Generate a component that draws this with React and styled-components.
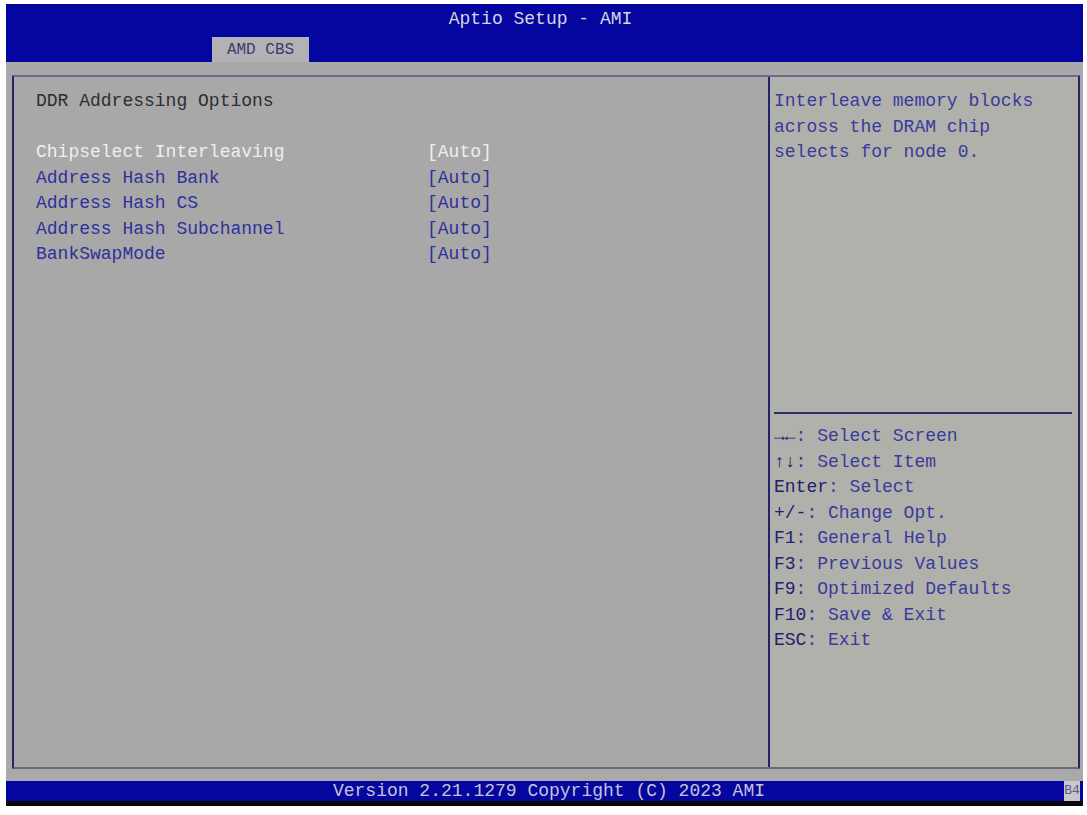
import styled, { createGlobalStyle } from 'styled-components';

const GlobalStyle = createGlobalStyle`
    body {
        margin: 0;
        background: #ffffff;
        font-family: "Liberation Mono", "DejaVu Sans Mono", monospace;
        font-size: 18px;
    }
`

const Screen = styled.div`
    width: 1077px;
    height: 802px;
    margin: 4px 0 0 6px;
    display: flex;
    flex-direction: column;
    background: #a9a9a9;
`

const TopBar = styled.div`
    height: 58px;
    background: #0505a0;
    display: flex;
    flex-direction: column;
    justify-content: space-between;
`

const Title = styled.div`
    color: #d6d6e0;
    text-align: center;
    line-height: 20px;
    padding-top: 5px;
    padding-right: 8px;
`

const TabRow = styled.div`
    display: flex;
    padding-left: 206px;
`

const Tab = styled.div`
    width: 97px;
    height: 25px;
    background: #b2b2b4;
    color: #3c3c6c;
    font-size: 16px;
    line-height: 27px;
    text-align: center;
`

const Body = styled.div`
    flex: 1;
    padding: 13px 3px 12px 6px;
    display: flex;
`

const Frame = styled.div`
    flex: 1;
    display: grid;
    grid-template-columns: 756px 1fr;
    border: 2px solid #24246c;
    border-top-color: #6a6a8a;
    border-bottom-color: #6a6a7a;
`

const LeftPanel = styled.div`
    background: #a8a8a8;
    padding: 12px 0 0 22px;
    border-right: 2px solid #22226a;
`

const Row = styled.div`
    display: flex;
    height: 25.5px;
    line-height: 25.5px;
    color: ${p => p.$color};
`

const Label = styled.span`
    width: 391px;
    white-space: pre;
`

const Value = styled.span`
    white-space: pre;
`

const RightPanel = styled.div`
    background: #b1b1ac;
    display: flex;
    flex-direction: column;
    padding: 0 6px 0 4px;
`

const HelpBlock = styled.div`
    height: 323px;
    padding-top: 12px;
    border-bottom: 2px solid #2c2c6e;
`

const KeyBlock = styled.div`
    padding-top: 10px;
`

const HelpLine = styled.div`
    height: 25.5px;
    line-height: 25.5px;
    color: #3a3a9c;
    white-space: pre;
`

const Key = styled.span`
    color: #20206e;
`

const Footer = styled.div`
    height: 20px;
    background: #0505a0;
    display: flex;
    align-items: center;
    border-bottom: 5px solid #08080c;
`

const FooterText = styled.div`
    flex: 1;
    text-align: center;
    color: #c4c4d4;
    font-size: 18px;
    padding-left: 28px;
`

const Badge = styled.div`
    width: 16px;
    height: 20px;
    margin-right: 3px;
    background: #c8c8cc;
    color: #5a5a8a;
    font-size: 13px;
    line-height: 20px;
    text-align: center;
`

const items = [
    { label: 'Chipselect Interleaving', value: '[Auto]', selected: true },
    { label: 'Address Hash Bank', value: '[Auto]' },
    { label: 'Address Hash CS', value: '[Auto]' },
    { label: 'Address Hash Subchannel', value: '[Auto]' },
    { label: 'BankSwapMode', value: '[Auto]' },
]

const keys = [
    ['\u2192\u2190', ': Select Screen'],
    ['\u2191\u2193', ': Select Item'],
    ['Enter', ': Select'],
    ['+/-', ': Change Opt.'],
    ['F1', ': General Help'],
    ['F3', ': Previous Values'],
    ['F9', ': Optimized Defaults'],
    ['F10', ': Save & Exit'],
    ['ESC', ': Exit'],
]

export default function App() {
    return (
        <>
            <GlobalStyle />
            <Screen>
                <TopBar>
                    <Title>Aptio Setup - AMI</Title>
                    <TabRow>
                        <Tab>AMD CBS</Tab>
                    </TabRow>
                </TopBar>
                <Body>
                    <Frame>
                        <LeftPanel>
                            <Row $color="#2e2e34">DDR Addressing Options</Row>
                            <Row />
                            {items.map(item => (
                                <Row key={item.label} $color={item.selected ? '#efefef' : '#30309c'}>
                                    <Label>{item.label}</Label>
                                    <Value>{item.value}</Value>
                                </Row>
                            ))}
                        </LeftPanel>
                        <RightPanel>
                            <HelpBlock>
                                <HelpLine>Interleave memory blocks</HelpLine>
                                <HelpLine>across the DRAM chip</HelpLine>
                                <HelpLine>selects for node 0.</HelpLine>
                            </HelpBlock>
                            <KeyBlock>
                                {keys.map(([k, d]) => (
                                    <HelpLine key={k}>
                                        <Key>{k}</Key>{d}
                                    </HelpLine>
                                ))}
                            </KeyBlock>
                        </RightPanel>
                    </Frame>
                </Body>
                <Footer>
                    <FooterText>Version 2.21.1279 Copyright (C) 2023 AMI</FooterText>
                    <Badge>B4</Badge>
                </Footer>
            </Screen>
        </>
    )
}
